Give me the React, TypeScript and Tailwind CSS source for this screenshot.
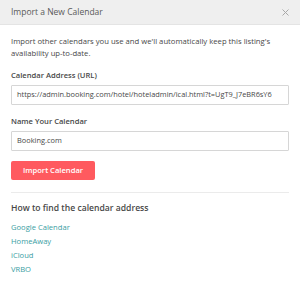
import React from "react";

export default function App() {
  return (
    <div className="w-[300px] h-[284px] bg-white text-[#484848] overflow-hidden" style={{ fontFamily: '"Open Sans", "Liberation Sans", sans-serif' }}>
      <div className="h-[25px] bg-[#efefef] border-b border-[#e4e4e4] flex items-center justify-between pl-[11px] pr-[10px]">
        <span className="text-[8.5px] text-[#5a5a5a]">Import a New Calendar</span>
        <svg width="7" height="7" viewBox="0 0 7 7" className="mr-[1px]">
          <path d="M0.5 0.5 L6.5 6.5 M6.5 0.5 L0.5 6.5" stroke="#a8a8a8" strokeWidth="1" />
        </svg>
      </div>
      <div className="px-[11px] pt-[10px]">
        <p className="text-[7.7px] leading-[12px] text-[#484848]">
          Import other calendars you use and we'll automatically keep this listing's availability up-to-date.
        </p>
        <div className="mt-[10px] text-[7.6px] font-semibold leading-[12px]">Calendar Address (URL)</div>
        <div className="mt-[4px] h-[20px] border border-[#d6d6d6] rounded-[1px] flex items-center px-[5px] text-[7.4px] whitespace-nowrap overflow-hidden">
          https://admin.booking.com/hotel/hoteladmin/ical.html?t=UgT9_J7eBR6sY6
        </div>
        <div className="mt-[10px] text-[7.6px] font-semibold leading-[12px]">Name Your Calendar</div>
        <div className="mt-[4px] h-[20px] border border-[#d6d6d6] rounded-[1px] flex items-center px-[5px] text-[7.4px]">
          Booking.com
        </div>
        <div className="mt-[10px] flex">
          <button className="h-[19px] w-[84px] bg-[#ff5a5f] rounded-[2px] text-white text-[7.6px] font-semibold">Import Calendar</button>
        </div>
        <div className="mt-[12px] border-t border-[#ebebeb]"></div>
        <div className="mt-[9px] text-[8.6px] font-semibold leading-[12px]">How to find the calendar address</div>
        <div className="mt-[6px] flex flex-col text-[7.6px] text-[#3a9ea3] leading-[14px]">
          <span>Google Calendar</span>
          <span>HomeAway</span>
          <span>iCloud</span>
          <span>VRBO</span>
        </div>
      </div>
    </div>
  );
}
